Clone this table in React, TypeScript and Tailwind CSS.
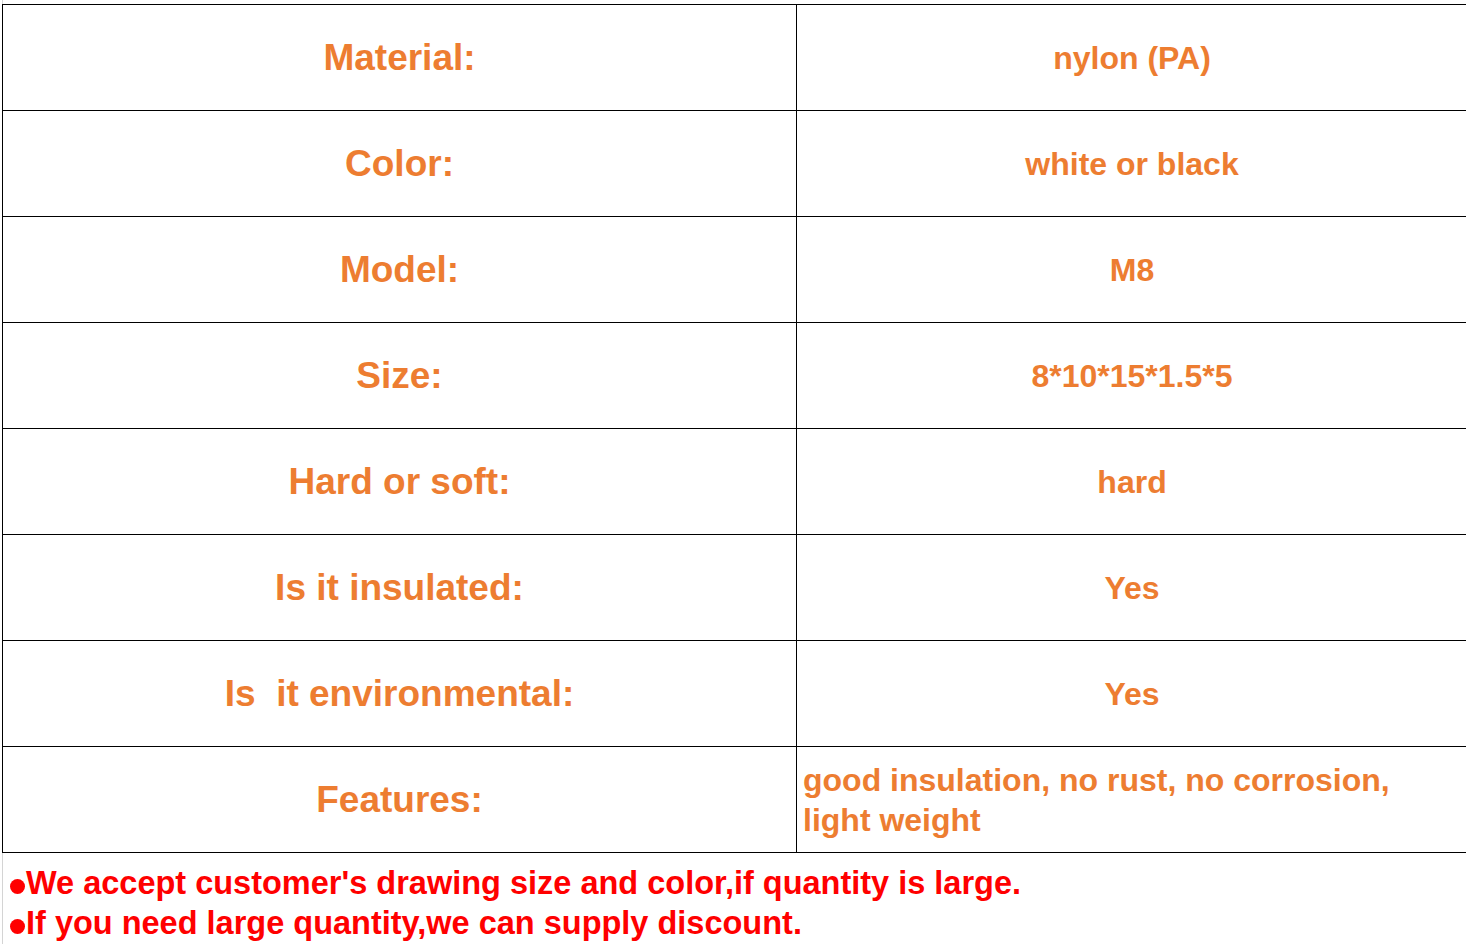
const rows: [string, string][] = [
  ["Material:", "nylon (PA)"],
  ["Color:", "white or black"],
  ["Model:", "M8"],
  ["Size:", "8*10*15*1.5*5"],
  ["Hard or soft:", "hard"],
  ["Is it insulated:", "Yes"],
  ["Is\u00a0 it environmental:", "Yes"],
];

function Dot() {
  return <span className="inline-block w-[15px] h-[15px] rounded-full bg-[#FF0000] mr-[1px]" />;
}

export default function App() {
  return (
    <div className="w-[1466px] h-[944px] overflow-hidden bg-white font-['Liberation_Sans',Arial,sans-serif] font-bold">
      <div className="ml-[2px] h-full border-l border-[#d4d4d4] pt-[4px]">
        <div className="-ml-px w-[1500px] border-t border-black">
          {rows.map(([label, value]) => (
            <div key={label} className="flex h-[106px] border-b border-black">
              <div className="w-[795px] shrink-0 border-x border-black flex items-center justify-center text-[37px] text-[#ED7D31]">
                {label}
              </div>
              <div className="w-[670px] shrink-0 flex items-center justify-center text-[32px] text-[#ED7D31]">
                {value}
              </div>
            </div>
          ))}
          <div className="flex h-[106px] border-b border-black">
            <div className="w-[795px] shrink-0 border-x border-black flex items-center justify-center text-[37px] text-[#ED7D31]">
              Features:
            </div>
            <div className="w-[670px] shrink-0 flex items-center pl-[6px] text-[32px] leading-[40px] text-[#ED7D31]">
              good insulation, no rust, no corrosion,
              <br />
              light weight
            </div>
          </div>
        </div>
        <div className="pt-[10px] pl-[7px] text-[32.5px] leading-[40px] text-[#FF0000]">
          <p>
            <Dot />
            We accept customer's drawing size and color,if quantity is large.
          </p>
          <p>
            <Dot />
            If you need large quantity,we can supply discount.
          </p>
        </div>
      </div>
    </div>
  );
}
